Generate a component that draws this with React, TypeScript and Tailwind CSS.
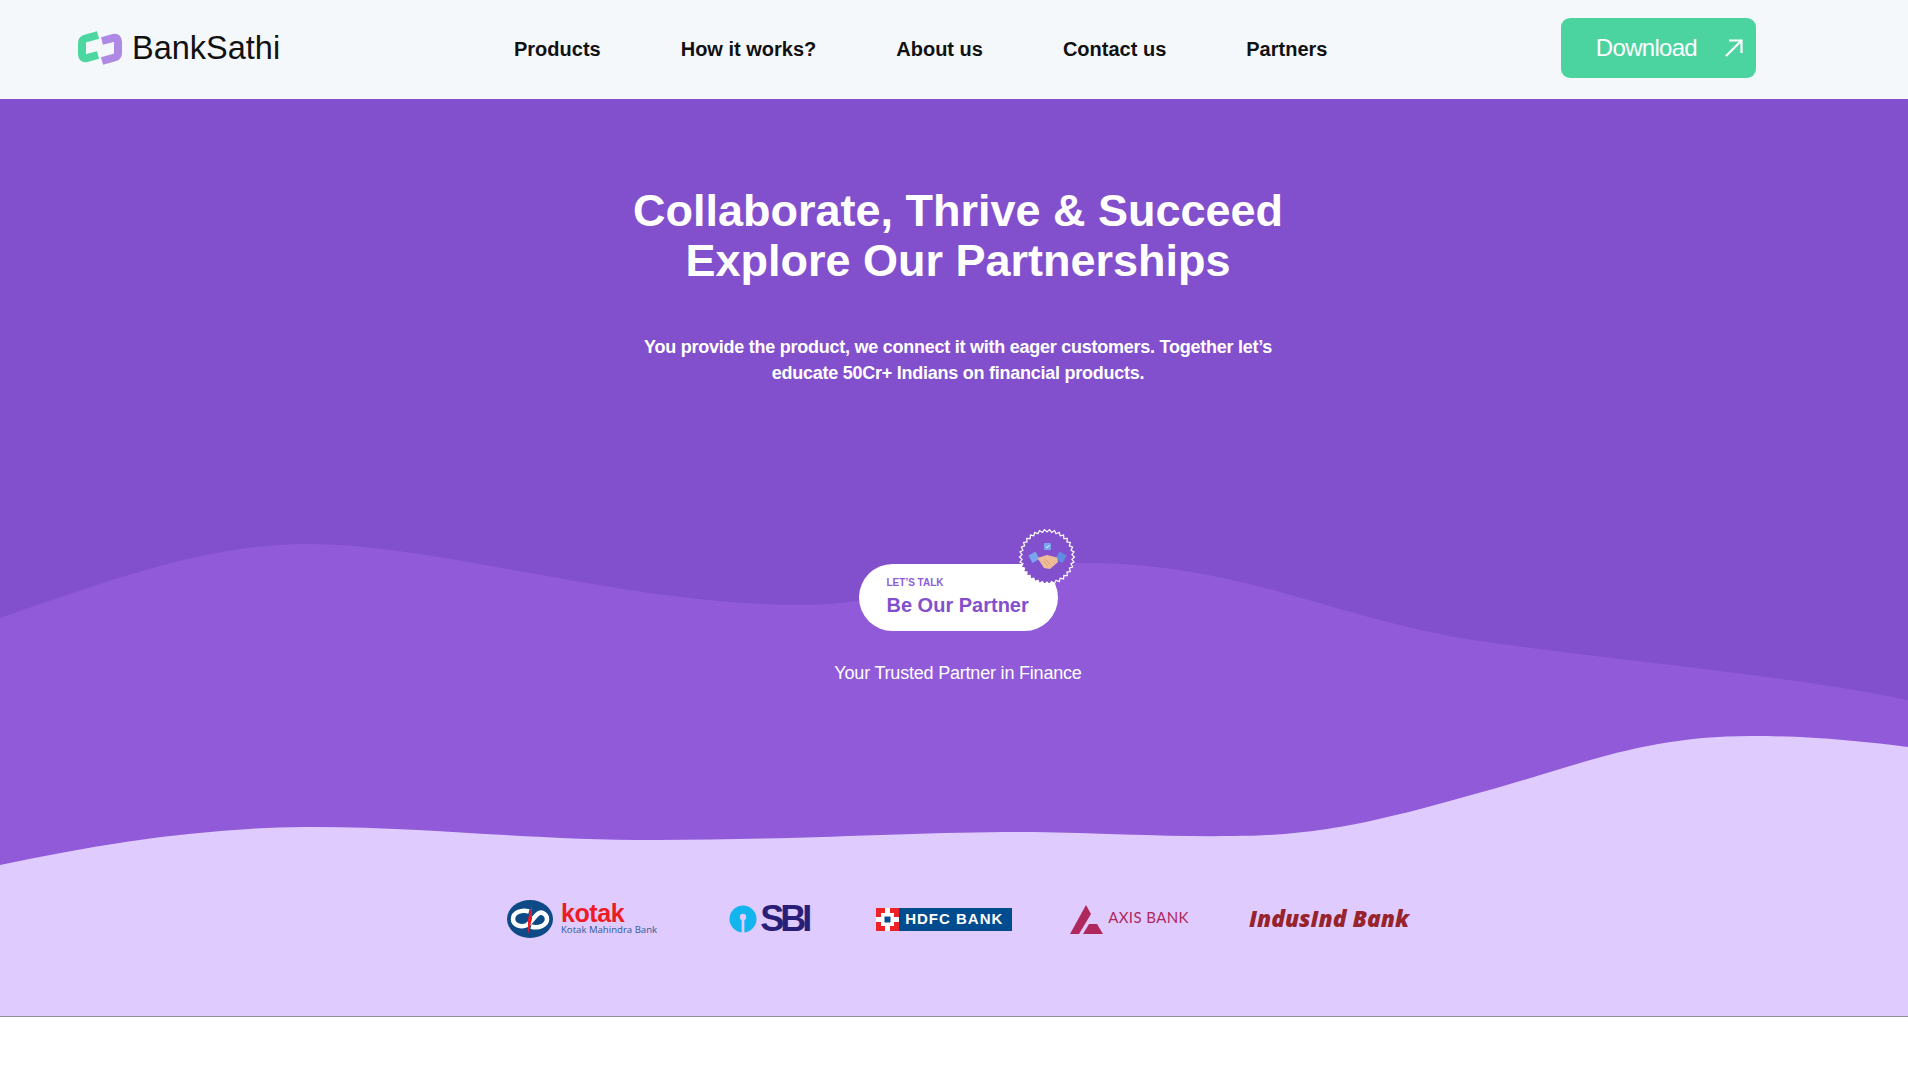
import React from 'react';

const navItems = ['Products', 'How it works?', 'About us', 'Contact us', 'Partners'];

// serrated ring round the handshake badge
const starPoints = (() => {
    const pts: string[] = [];
    const teeth = 34;
    for (let i = 0; i < teeth * 2; i++) {
        const r = i % 2 === 0 ? 27.5 : 25;
        const a = (Math.PI * i) / teeth;
        pts.push(`${(29 + r * Math.cos(a)).toFixed(2)},${(29 + r * Math.sin(a)).toFixed(2)}`);
    }
    return pts.join(' ');
})();

const Logo = () => (
    <svg width="46" height="36" viewBox="0 0 46 36" className="shrink-0">
        <path d="M21 5 L8.5 8.5 Q5 9.5 5 13 V24 Q5 29 9.5 28 L21 25" fill="none" stroke="#4cd6a0" strokeWidth="8" />
        <path d="M25 31 L37.5 27.5 Q41 26.5 41 23 V12 Q41 7 36.5 8 L25 11" fill="none" stroke="#ae8ae4" strokeWidth="8" />
    </svg>
);

const Badge = () => (
    <svg width="58" height="58" viewBox="0 0 58 58" className="absolute -top-[36px] right-[-18px]">
        <polygon points={starPoints} fill="#8350cd" stroke="#ffffff" strokeWidth="1.2" />
        <rect x="26" y="15" width="7" height="7" rx="1.2" fill="#7ba4f0" />
        <path d="M27.8 18.5 l1.3 1.3 l2.3 -2.6" fill="none" stroke="#ffffff" strokeWidth="0.9" />
        <path d="M10.5 27.5 L17.5 23.5 L21.5 31 L14.5 35 Z" fill="#79a4ee" />
        <path d="M48.5 27.5 L41.5 23.5 L37.5 31 L44.5 35 Z" fill="#5f8de4" />
        <path d="M19.5 30 L29 27 L39 29.5 L40 34 L32 41 L26 40 Z" fill="#eebd97" />
        <path d="M27 31 L33 37 M25 33 L30 38" fill="none" stroke="#d49a70" strokeWidth="0.8" />
    </svg>
);

const Kotak = () => (
    <div className="flex items-center gap-[8px]">
        <svg width="46" height="38" viewBox="0 0 46 38">
            <ellipse cx="23" cy="19" rx="23" ry="19" fill="#0e4a86" />
            <path d="M22 11.5 C14 9 6 13 6 19 C6 25 14 28 20 25 C25 22 27 16 32 13 C36 11.5 40 15 40 19 C40 25 32 29 24 26.5" fill="none" stroke="#ffffff" strokeWidth="4.5" />
            <path d="M25 5 L21 19 V34 L25 19 Z" fill="#ed1c24" />
        </svg>
        <div className="flex flex-col">
            <span className="font-['Liberation_Sans',sans-serif] font-bold text-[25px] leading-[22px] tracking-[-0.4px] text-[#ed1c24]">kotak</span>
            <span className="font-['Open_Sans',sans-serif] text-[9.6px] leading-[12px] whitespace-nowrap text-[#2f5a96]">Kotak Mahindra Bank</span>
        </div>
    </div>
);

const Sbi = () => (
    <div className="flex items-center gap-[3px] ml-[72px]">
        <svg width="28" height="28" viewBox="0 0 28 28">
            <circle cx="14" cy="14" r="13.5" fill="#12b5ee" />
            <circle cx="14" cy="12" r="3.2" fill="#dfcbfe" />
            <rect x="12.6" y="13" width="2.8" height="15" fill="#dfcbfe" />
        </svg>
        <span className="font-['Liberation_Sans',sans-serif] font-bold text-[36px] leading-none tracking-[-4px] text-[#2a1f78]">SBI</span>
    </div>
);

const Hdfc = () => (
    <div className="flex items-center w-[136px] h-[23px] ml-[68px] bg-[#004c8f]">
        <svg width="23" height="23" viewBox="0 0 23 23" className="shrink-0">
            <rect width="23" height="23" fill="#ed232a" />
            <rect x="5" y="5" width="13" height="13" fill="#ffffff" />
            <rect x="0" y="9" width="23" height="5" fill="#ffffff" />
            <rect x="9" y="0" width="5" height="23" fill="#ffffff" />
            <rect x="8.5" y="8.5" width="6" height="6" fill="#004c8f" />
        </svg>
        <span className="ml-[6px] font-['Liberation_Sans',sans-serif] font-bold text-[15px] tracking-[1px] whitespace-nowrap text-white">HDFC BANK</span>
    </div>
);

const Axis = () => (
    <div className="flex items-center gap-[5px] ml-[58px]">
        <svg width="33" height="29" viewBox="0 0 33 29">
            <path d="M0 29 L16 0 L21 9 L9 29 Z" fill="#ae285d" />
            <path d="M13 29 L19 19 H27 L33 29 Z" fill="#ae285d" />
        </svg>
        <span className="font-['Lato',sans-serif] text-[15px] tracking-[0.4px] whitespace-nowrap text-[#ae285d] -mt-[4px]">AXIS BANK</span>
    </div>
);

const Indus = () => (
    <span className="ml-[60px] font-['Open_Sans',sans-serif] font-extrabold italic text-[22.8px] whitespace-nowrap text-[#97232c]">IndusInd Bank</span>
);

export default function App() {
    return (
        <div className="min-h-[1072px] bg-white font-['Liberation_Sans',sans-serif]">
            <header className="flex items-center h-[99px] pb-[3px] bg-[#f4f8fb]">
                <div className="flex items-center gap-[9px] ml-[77px] w-[437px]">
                    <Logo />
                    <span className="text-[32.5px] leading-none text-[#111111]">BankSathi</span>
                </div>
                <nav className="flex items-center gap-[80px] w-[1047px] pt-[1px]">
                    {navItems.map((item) => (
                        <a key={item} href="#" className="text-[20px] font-bold whitespace-nowrap text-[#111111]">{item}</a>
                    ))}
                </nav>
                <button className="flex items-center justify-end w-[195px] h-[60px] pr-[13px] gap-[28px] rounded-[9px] bg-[#4bd49f] text-white">
                    <span className="text-[24px] tracking-[-0.7px]">Download</span>
                    <svg width="18" height="18" viewBox="0 0 18 18" fill="none" stroke="currentColor" strokeWidth="2.2">
                        <path d="M1 17 L16.5 1.5 M4 1.5 H16.5 V14" />
                    </svg>
                </button>
            </header>

            <section className="relative h-[918px] overflow-hidden border-b border-[#8f8f99] bg-[#8350cd]">
                <svg className="absolute inset-0" width="1908" height="917" viewBox="0 0 1908 917">
                    <path d="M0 519 C100 485 200 446 304 445 C440 444 620 506 803 506 C900 506 980 462 1095 464 C1250 467 1340 522 1480 542 C1640 565 1780 575 1908 601 V917 H0 Z" fill="#905ad9" />
                    <path d="M0 766 C100 745 200 729 304 728 C420 727 520 741 657 741 C800 741 930 732 1034 733 C1100 734 1170 738 1233 737 C1330 737 1400 716 1500 688 C1590 662 1650 637 1752 637 C1810 637 1860 642 1908 648 V917 H0 Z" fill="#dfcbfe" />
                </svg>

                <div className="relative flex flex-col items-center pt-[87px] pl-[8px]">
                    <h1 className="text-[45px] leading-[50px] font-bold text-center text-white">
                        Collaborate, Thrive &amp; Succeed<br />Explore Our Partnerships
                    </h1>
                    <p className="mt-[49px] text-[18px] leading-[25.5px] font-bold tracking-[-0.25px] text-center text-white">
                        You provide the product, we connect it with eager customers. Together let’s<br />educate 50Cr+ Indians on financial products.
                    </p>
                    <div className="relative mt-[178px] flex flex-col justify-center w-[199px] h-[67px] pl-[28px] rounded-full bg-white">
                        <span className="-mt-[1px] text-[10px] leading-[12px] font-bold text-[#8d5bd8]">LET’S TALK</span>
                        <span className="mt-[3px] text-[20px] leading-[26px] font-bold text-[#8350cd]">Be Our Partner</span>
                        <Badge />
                    </div>
                    <p className="mt-[29px] text-[18px] leading-[27px] tracking-[-0.2px] text-white">Your Trusted Partner in Finance</p>
                    <div className="flex items-center justify-center mt-[209px] h-[46px]">
                        <Kotak />
                        <Sbi />
                        <Hdfc />
                        <Axis />
                        <Indus />
                    </div>
                </div>
            </section>
        </div>
    );
}
